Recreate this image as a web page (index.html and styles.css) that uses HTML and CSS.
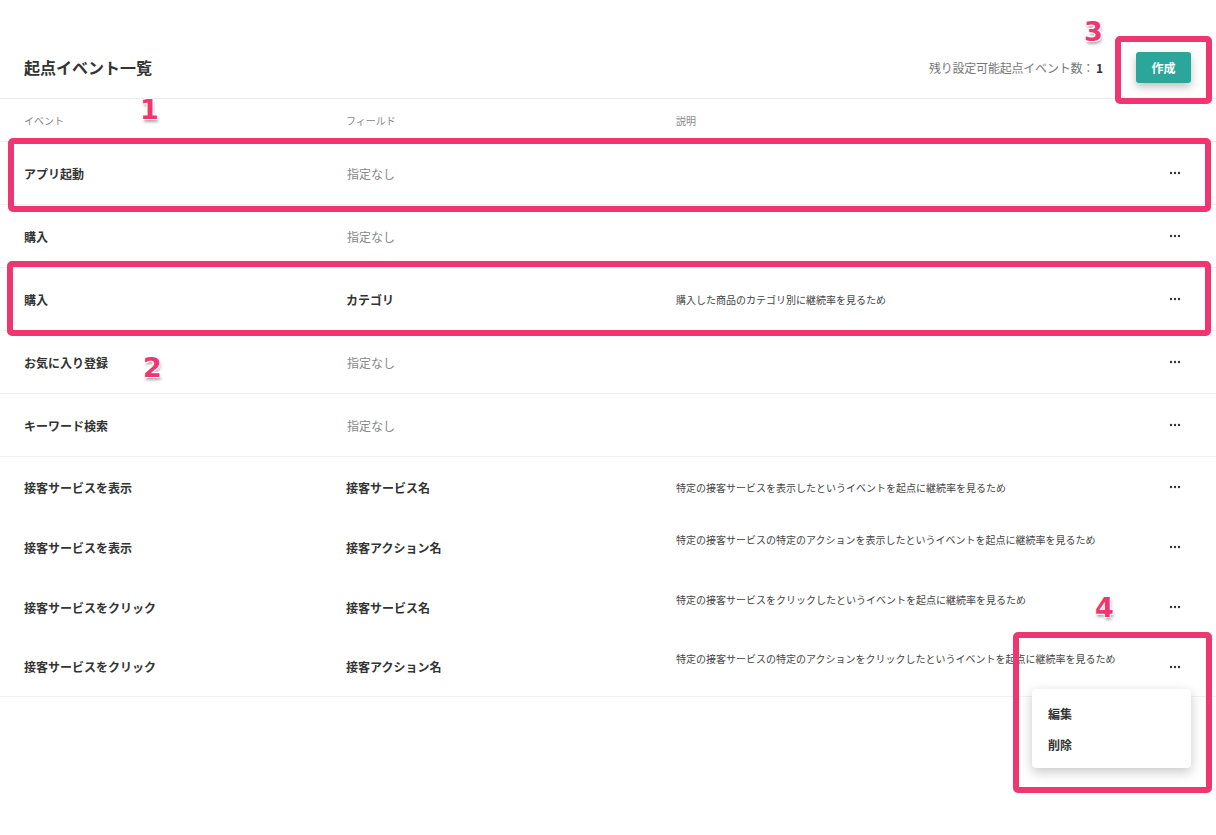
FILE: index.html
```html
<!DOCTYPE html>
<html lang="ja">

<head>
    <meta charset="UTF-8">
    <title>起点イベント一覧</title>
    <link rel="stylesheet" href="styles.css">
</head>

<body>

    <div class="page">

        <header class="bar">
            <h1>起点イベント一覧</h1>
            <div class="bar-right">
                <span class="quota">残り設定可能起点イベント数：<b>1</b></span>
                <button class="btn-create">作成</button>
            </div>
        </header>

        <section class="list">
            <div class="row head">
                <div>イベント</div>
                <div>フィールド</div>
                <div>説明</div>
                <div></div>
            </div>

            <div class="row">
                <div class="name">アプリ起動</div>
                <div class="field none">指定なし</div>
                <div class="desc"></div>
                <div class="more"><svg width="12" height="4" viewBox="0 0 12 4"><circle cx="2" cy="2" r="1.2"/><circle cx="6" cy="2" r="1.2"/><circle cx="10" cy="2" r="1.2"/></svg></div>
            </div>
            <div class="row">
                <div class="name">購入</div>
                <div class="field none">指定なし</div>
                <div class="desc"></div>
                <div class="more"><svg width="12" height="4" viewBox="0 0 12 4"><circle cx="2" cy="2" r="1.2"/><circle cx="6" cy="2" r="1.2"/><circle cx="10" cy="2" r="1.2"/></svg></div>
            </div>
            <div class="row">
                <div class="name">購入</div>
                <div class="field">カテゴリ</div>
                <div class="desc">購入した商品のカテゴリ別に継続率を見るため</div>
                <div class="more"><svg width="12" height="4" viewBox="0 0 12 4"><circle cx="2" cy="2" r="1.2"/><circle cx="6" cy="2" r="1.2"/><circle cx="10" cy="2" r="1.2"/></svg></div>
            </div>
            <div class="row">
                <div class="name">お気に入り登録</div>
                <div class="field none">指定なし</div>
                <div class="desc"></div>
                <div class="more"><svg width="12" height="4" viewBox="0 0 12 4"><circle cx="2" cy="2" r="1.2"/><circle cx="6" cy="2" r="1.2"/><circle cx="10" cy="2" r="1.2"/></svg></div>
            </div>
            <div class="row">
                <div class="name">キーワード検索</div>
                <div class="field none">指定なし</div>
                <div class="desc"></div>
                <div class="more"><svg width="12" height="4" viewBox="0 0 12 4"><circle cx="2" cy="2" r="1.2"/><circle cx="6" cy="2" r="1.2"/><circle cx="10" cy="2" r="1.2"/></svg></div>
            </div>
            <div class="row plain">
                <div class="name">接客サービスを表示</div>
                <div class="field">接客サービス名</div>
                <div class="desc">特定の接客サービスを表示したというイベントを起点に継続率を見るため</div>
                <div class="more"><svg width="12" height="4" viewBox="0 0 12 4"><circle cx="2" cy="2" r="1.2"/><circle cx="6" cy="2" r="1.2"/><circle cx="10" cy="2" r="1.2"/></svg></div>
            </div>
            <div class="row plain">
                <div class="name">接客サービスを表示</div>
                <div class="field">接客アクション名</div>
                <div class="desc up">特定の接客サービスの特定のアクションを表示したというイベントを起点に継続率を見るため</div>
                <div class="more"><svg width="12" height="4" viewBox="0 0 12 4"><circle cx="2" cy="2" r="1.2"/><circle cx="6" cy="2" r="1.2"/><circle cx="10" cy="2" r="1.2"/></svg></div>
            </div>
            <div class="row plain">
                <div class="name">接客サービスをクリック</div>
                <div class="field">接客サービス名</div>
                <div class="desc up">特定の接客サービスをクリックしたというイベントを起点に継続率を見るため</div>
                <div class="more"><svg width="12" height="4" viewBox="0 0 12 4"><circle cx="2" cy="2" r="1.2"/><circle cx="6" cy="2" r="1.2"/><circle cx="10" cy="2" r="1.2"/></svg></div>
            </div>
            <div class="row last">
                <div class="name">接客サービスをクリック</div>
                <div class="field">接客アクション名</div>
                <div class="desc up">特定の接客サービスの特定のアクションをクリックしたというイベントを起点に継続率を見るため</div>
                <div class="more"><svg width="12" height="4" viewBox="0 0 12 4"><circle cx="2" cy="2" r="1.2"/><circle cx="6" cy="2" r="1.2"/><circle cx="10" cy="2" r="1.2"/></svg></div>
            </div>
        </section>

        <!-- row action menu -->
        <ul class="menu">
            <li>編集</li>
            <li>削除</li>
        </ul>

        <!-- callouts -->
        <div class="mark box1"></div>
        <div class="mark box2"></div>
        <div class="mark box3"></div>
        <div class="mark box4"></div>
        <span class="num n1">1</span>
        <span class="num n2">2</span>
        <span class="num n3">3</span>
        <span class="num n4">4</span>

    </div>

</body>

</html>
```

FILE: styles.css
```css
* {
    box-sizing: border-box;
}

body {
    margin: 0;
    background-color: white;
    color: #333;
    font-family: "Noto Sans CJK JP", "Noto Sans", sans-serif;
}

.page {
    position: relative;
    width: 1216px;
    height: 835px;
    overflow: hidden;
}

/* top bar */

.bar {
    display: flex;
    align-items: center;
    justify-content: space-between;
    height: 99px;
    padding: 36px 25px 0 24px;
    border-bottom: 1px solid #ececec;
}

.bar h1 {
    margin: 0;
    font-size: 16px;
    font-weight: bold;
    color: #333;
}

.bar-right {
    display: flex;
    align-items: center;
    gap: 33px;
}

.quota {
    font-size: 12px;
    color: #777;
    letter-spacing: -0.2px;
}

.quota b {
    color: #333;
    margin-left: 2px;
}

.btn-create {
    width: 55px;
    height: 31px;
    border: none;
    border-radius: 3px;
    background-color: #2aa69a;
    color: white;
    font-family: inherit;
    font-size: 12px;
    font-weight: bold;
    box-shadow: 0 4px 8px rgba(0, 0, 0, 0.25);
}

/* list */

.row {
    display: grid;
    grid-template-columns: 322px 330px 1fr 12px;
    align-items: center;
    height: 63px;
    padding: 0 35px 0 24px;
    border-bottom: 1px solid #f0f0f0;
}

.row.head {
    height: 43px;
    font-size: 10px;
    color: #888;
}

.row.plain {
    height: 60px;
    border-bottom: none;
}

.row.last {
    height: 60px;
}

.name {
    font-size: 12px;
    font-weight: bold;
}

.field {
    font-size: 12px;
    font-weight: bold;
}

.field.none {
    font-weight: normal;
    color: #888;
    padding-left: 1px;
}

.desc {
    font-size: 10px;
    color: #444;
}

.desc.up {
    padding-bottom: 16px;
}

.more {
    display: flex;
    align-items: center;
}

.more svg {
    fill: #333;
}

/* dropdown */

.menu {
    position: absolute;
    left: 1032px;
    top: 689px;
    width: 159px;
    height: 79px;
    margin: 0;
    padding: 9px 16px 0;
    list-style: none;
    background-color: white;
    border-radius: 4px;
    box-shadow: 0 4px 12px rgba(0, 0, 0, 0.22);
}

.menu li {
    font-size: 12px;
    font-weight: bold;
    line-height: 31px;
}

/* pink callouts */

.mark {
    position: absolute;
    border: 6px solid #f03671;
    border-radius: 5px;
}

.box1 {
    left: 8px;
    top: 138px;
    width: 1203px;
    height: 74px;
}

.box2 {
    left: 7px;
    top: 261px;
    width: 1204px;
    height: 75px;
}

.box3 {
    left: 1115px;
    top: 36px;
    width: 97px;
    height: 68px;
}

.box4 {
    left: 1013px;
    top: 632px;
    width: 199px;
    height: 161px;
}

.num {
    position: absolute;
    font-family: "DejaVu Sans", sans-serif;
    font-size: 27px;
    font-weight: bold;
    line-height: 1;
    color: #f03671;
    text-shadow: -1px -1px 0 white, 1px -1px 0 white, -1px 1px 0 white, 1px 1px 0 white, 1px 3px 3px rgba(0, 0, 0, 0.35);
}

.n1 {
    left: 140px;
    top: 96px;
}

.n2 {
    left: 143px;
    top: 354px;
}

.n3 {
    left: 1084px;
    top: 18px;
}

.n4 {
    left: 1095px;
    top: 594px;
}
```
